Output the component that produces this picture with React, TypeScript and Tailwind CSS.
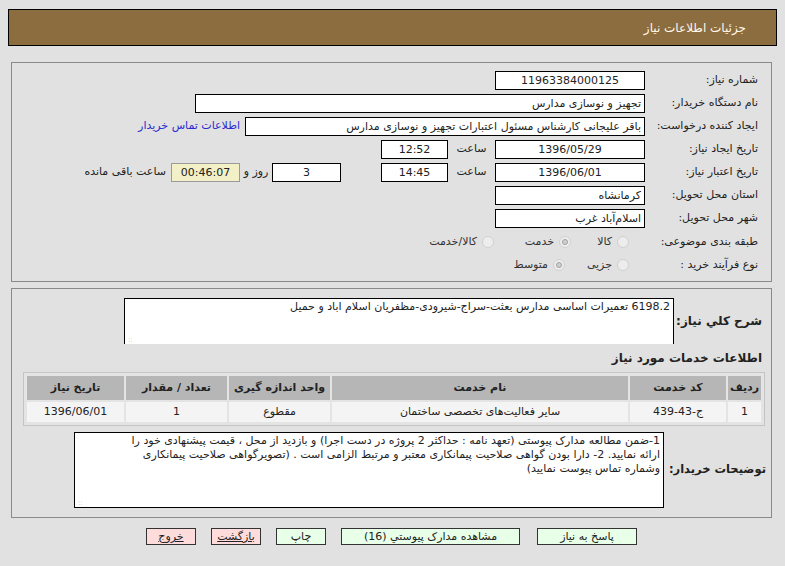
import React from "react";

const font = { fontFamily: '"DejaVu Sans", Tahoma, sans-serif' };

const Field = ({
  w,
  children,
  center,
  className = "",
}: {
  w: string;
  children?: React.ReactNode;
  center?: boolean;
  className?: string;
}) => (
  <div
    className={`h-[19px] border border-black bg-white px-[3px] leading-[17px] text-[11px] text-[#222] whitespace-nowrap overflow-hidden ${
      center ? "text-center" : "text-right"
    } ${w} ${className}`}
  >
    {children}
  </div>
);

const Label = ({ children }: { children: React.ReactNode }) => (
  <div className="w-[113px] shrink-0 text-right text-[11px] text-[#222] whitespace-nowrap">
    {children}
  </div>
);

const Radio = ({ checked }: { checked?: boolean }) => (
  <span className="inline-flex size-[12px] items-center justify-center rounded-full border border-[#d0d0d0] bg-[#ededed]">
    {checked && <span className="size-[6px] rounded-full border border-[#a0a0a0] bg-[#d0d0d0]" />}
  </span>
);

const Btn = ({
  children,
  w,
  pink,
}: {
  children: React.ReactNode;
  w: string;
  pink?: boolean;
}) => (
  <div
    className={`h-[17px] border border-[#333] text-center text-[11px] leading-[15px] text-[#222] ${w} ${
      pink ? "bg-[#ffdcdc] underline" : "bg-[#e8ffe8]"
    }`}
  >
    {children}
  </div>
);

export default function App() {
  return (
    <div className="min-h-[566px] w-[785px] bg-[#e1e1e1] pt-[9px]" style={font}>
      {/* header */}
      <div className="mx-[8px] h-[37px] border border-black bg-[#8c6d3f] flex items-center justify-end pr-[30px]">
        <span className="text-[12px] text-[#fff8ea]" dir="rtl">
          جزئیات اطلاعات نیاز
        </span>
      </div>

      {/* main info panel */}
      <div
        dir="rtl"
        className="ml-[11px] mt-[16px] w-[761px] h-[220px] border border-[#8a8a8a] pr-[13px] pt-[6px]"
      >
        <div className="flex h-[23px] items-center">
          <Label>شماره نیاز:</Label>
          <Field w="w-[150px]" center>
            11963384000125
          </Field>
        </div>
        <div className="flex h-[23px] items-center">
          <Label>نام دستگاه خریدار:</Label>
          <Field w="w-[450px]">تجهیز و نوسازی مدارس</Field>
        </div>
        <div className="flex h-[23px] items-center">
          <Label>ایجاد کننده درخواست:</Label>
          <Field w="w-[400px]">باقر علیجانی کارشناس مسئول اعتبارات تجهیز و نوسازی مدارس</Field>
          <span className="mr-[5px] text-[11px] text-[#2a2ad0] whitespace-nowrap">
            اطلاعات تماس خریدار
          </span>
        </div>
        <div className="flex h-[23px] items-center">
          <Label>تاریخ ایجاد نیاز:</Label>
          <Field w="w-[150px]" center>
            1396/05/29
          </Field>
          <span className="w-[47px] text-center text-[11px] text-[#222]">ساعت</span>
          <Field w="w-[67px]" center>
            12:52
          </Field>
        </div>
        <div className="flex h-[23px] items-center">
          <Label>تاریخ اعتبار نیاز:</Label>
          <Field w="w-[150px]" center>
            1396/06/01
          </Field>
          <span className="w-[47px] text-center text-[11px] text-[#222]">ساعت</span>
          <Field w="w-[67px]" center>
            14:45
          </Field>
          <Field w="w-[69px]" center className="mr-[40px]">
            3
          </Field>
          <span className="w-[32px] text-center text-[11px] text-[#222]">روز و</span>
          <div className="h-[19px] w-[69px] border border-[#9a9a9a] bg-[#f3efc6] text-center text-[11px] leading-[17px] text-[#222]">
            00:46:07
          </div>
          <span className="mr-[5px] text-[11px] text-[#222] whitespace-nowrap">ساعت باقی مانده</span>
        </div>
        <div className="flex h-[23px] items-center">
          <Label>استان محل تحویل:</Label>
          <Field w="w-[150px]">کرمانشاه</Field>
        </div>
        <div className="flex h-[23px] items-center">
          <Label>شهر محل تحویل:</Label>
          <Field w="w-[150px]">اسلام‌آباد غرب</Field>
        </div>
        <div className="flex h-[24px] items-center text-[11px] text-[#333]">
          <Label>طبقه بندی موضوعی:</Label>
          <div className="flex items-center gap-[5px] pr-[16px]">
            <Radio />
            <span className="w-[36px]">کالا</span>
            <Radio checked />
            <span className="w-[55px]">خدمت</span>
            <Radio />
            <span>کالا/خدمت</span>
          </div>
        </div>
        <div className="flex h-[22px] items-center text-[11px] text-[#333]">
          <Label>نوع فرآیند خرید :</Label>
          <div className="flex items-center gap-[5px] pr-[16px]">
            <Radio />
            <span className="w-[42px]">جزیی</span>
            <Radio checked />
            <span>متوسط</span>
          </div>
        </div>
      </div>

      {/* details panel */}
      <div
        dir="rtl"
        className="ml-[11px] mt-[6px] w-[761px] h-[230px] border border-[#8a8a8a] pt-[9px]"
      >
        <div className="flex items-center pr-[9px]">
          <div className="w-[88px] shrink-0 text-right text-[12px] font-bold text-[#222] whitespace-nowrap">
            شرح کلي نیاز:
          </div>
          <div className="relative h-[46px] w-[550px] border-x border-t border-black bg-white px-[3px] pt-[1px] text-right text-[11px] leading-[14px] text-[#222]">
            6198.2 تعمیرات اساسی مدارس بعثت-سراج-شیرودی-مظفریان اسلام اباد و حمیل
            <span className="absolute bottom-0 left-[3px] text-[7px] leading-none text-[#bbb]">::</span>
          </div>
        </div>

        <div className="mt-[5px] pr-[9px] text-right text-[12px] font-bold text-[#222]">
          اطلاعات خدمات مورد نیاز
        </div>

        <div className="mr-[6px] mt-[5px] w-[742px] border border-[#c4c4c4] bg-[#e4e4e4] p-[1px]">
          <table className="w-full border-separate border-spacing-[2px] text-[11px] text-[#222]">
            <thead>
              <tr className="h-[24px] bg-[#b6b6b6] font-bold">
                <th className="w-[33px] text-center font-bold">ردیف</th>
                <th className="w-[96px] text-center font-bold">کد خدمت</th>
                <th className="w-[296px] text-center font-bold">نام خدمت</th>
                <th className="w-[101px] text-center font-bold">واحد اندازه گیری</th>
                <th className="w-[101px] text-center font-bold">تعداد / مقدار</th>
                <th className="text-center font-bold">تاریخ نیاز</th>
              </tr>
            </thead>
            <tbody>
              <tr className="h-[20px] bg-[#f4f4f4]">
                <td className="text-center">1</td>
                <td className="text-center">ج-43-439</td>
                <td className="text-center">سایر فعالیت‌های تخصصی ساختمان</td>
                <td className="text-center">مقطوع</td>
                <td className="text-center">1</td>
                <td className="text-center">1396/06/01</td>
              </tr>
            </tbody>
          </table>
        </div>

        <div className="mt-[6px] flex items-center pr-[5px]">
          <div className="w-[102px] shrink-0 text-right text-[11.5px] font-bold text-[#222] whitespace-nowrap">
            توضیحات خریدار:
          </div>
          <div className="relative h-[76px] w-[590px] border border-black bg-white px-[3px] pt-[1px] text-right text-[11px] leading-[14px] text-[#222] whitespace-nowrap overflow-hidden">
            1-ضمن مطالعه مدارک پیوستی (تعهد نامه : حداکثر 2 پروژه در دست اجرا) و بازدید از محل ، قیمت پیشنهادی خود را
            <br />
            ارائه نمایید. 2- دارا بودن گواهی صلاحیت پیمانکاری معتبر و مرتبط الزامی است . (تصویرگواهی صلاحیت پیمانکاری
            <br />
            وشماره تماس پیوست نمایید)
            <span className="absolute bottom-0 left-[3px] text-[7px] leading-none text-[#bbb]">::</span>
          </div>
        </div>
      </div>

      {/* buttons */}
      <div dir="rtl" className="mt-[10px] flex items-center pr-[148px]">
        <Btn w="w-[100px]">پاسخ به نیاز</Btn>
        <div className="mr-[17px]">
          <Btn w="w-[179px]">مشاهده مدارک پیوستي (16)</Btn>
        </div>
        <div className="mr-[15px]">
          <Btn w="w-[50px]">چاپ</Btn>
        </div>
        <div className="mr-[15px]">
          <Btn w="w-[50px]" pink>
            بازگشت
          </Btn>
        </div>
        <div className="mr-[15px]">
          <Btn w="w-[50px]" pink>
            خروج
          </Btn>
        </div>
      </div>
    </div>
  );
}
